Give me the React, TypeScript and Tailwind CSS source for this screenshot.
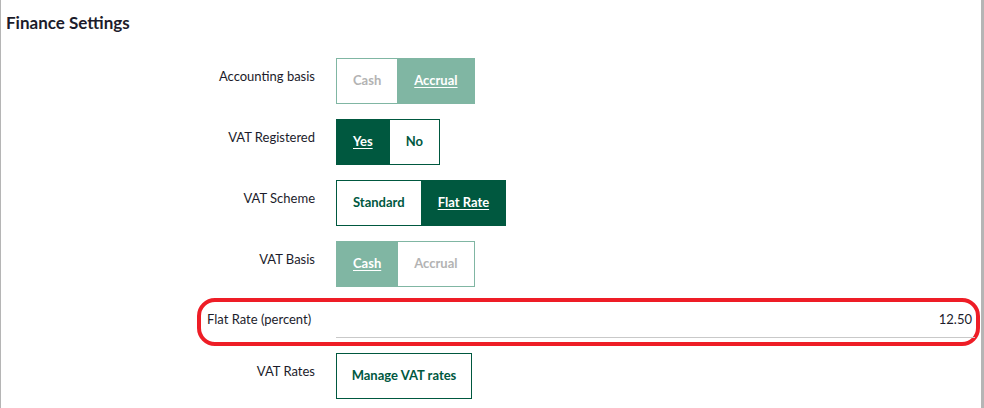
import React from "react";

type Option = {
  label: string;
  selected: boolean;
};

type Row = {
  label: string;
  options: Option[];
  muted?: boolean;
};

const rows: Row[] = [
  {
    label: "Accounting basis",
    muted: true,
    options: [
      { label: "Cash", selected: false },
      { label: "Accrual", selected: true },
    ],
  },
  {
    label: "VAT Registered",
    options: [
      { label: "Yes", selected: true },
      { label: "No", selected: false },
    ],
  },
  {
    label: "VAT Scheme",
    options: [
      { label: "Standard", selected: false },
      { label: "Flat Rate", selected: true },
    ],
  },
  {
    label: "VAT Basis",
    muted: true,
    options: [
      { label: "Cash", selected: true },
      { label: "Accrual", selected: false },
    ],
  },
];

const ButtonToggle = ({ options, muted }: { options: Option[]; muted?: boolean }) => {
  return (
    <div className="flex">
      {options.map((opt, i) => {
        let cls = "";
        if (muted) {
          cls = opt.selected
            ? "bg-[#80b6a3] border-[#80b6a3] text-white underline"
            : "bg-white border-[#80b6a3] text-[#b3b3b3]";
        } else {
          cls = opt.selected
            ? "bg-[#00583f] border-[#00583f] text-white underline"
            : "bg-white border-[#00583f] text-[#00583f]";
        }
        return (
          <button
            key={opt.label}
            className={`h-[46px] px-[16px] border text-[13px] font-bold underline-offset-2 ${cls} ${
              i > 0 ? "-ml-px" : ""
            }`}
          >
            {opt.label}
          </button>
        );
      })}
    </div>
  );
};

const FieldLabel = ({ children }: { children: React.ReactNode }) => (
  <div className="w-[314px] shrink-0 pt-[8px] text-right text-[13px] leading-[20px] text-[#1c1c2b]">
    {children}
  </div>
);

export default function App() {
  return (
    <div
      className="h-[408px] w-[984px] overflow-hidden border-l border-r-[3px] border-l-[#b5b5b5] border-r-[#b5b5b5] bg-white"
      style={{ fontFamily: "Lato, 'Noto Sans', sans-serif" }}
    >
      <h2 className="pl-[5px] pt-[11px] text-[17px] font-bold leading-[24px] text-[#1c1c2b]">
        Finance Settings
      </h2>

      <div className="mt-[23px] flex flex-col gap-[15px]">
        {rows.map((row) => (
          <div key={row.label} className="flex">
            <FieldLabel>{row.label}</FieldLabel>
            <div className="ml-[21px]">
              <ButtonToggle options={row.options} muted={row.muted} />
            </div>
          </div>
        ))}
      </div>

      <div className="mt-[11px] ml-[196px] mr-px flex h-[48px] rounded-[18px] border-4 border-[#ee1d26]">
        <div className="w-[135px] shrink-0 pl-[6px] pt-[7px] text-[13px] leading-[20px] text-[#1c1c2b]">
          Flat Rate (percent)
        </div>
        <div className="mr-[1px] h-[36px] flex-1 border-b border-[#c9c9c9] pr-[3px] pt-[7px] text-right text-[13px] leading-[20px] text-[#1c1c2b]">
          12.50
        </div>
      </div>

      <div className="mt-[7px] flex">
        <FieldLabel>VAT Rates</FieldLabel>
        <div className="ml-[21px]">
          <button className="h-[46px] w-[136px] border border-[#00583f] bg-white text-[13px] font-bold text-[#00583f]">
            Manage VAT rates
          </button>
        </div>
      </div>
    </div>
  );
}
